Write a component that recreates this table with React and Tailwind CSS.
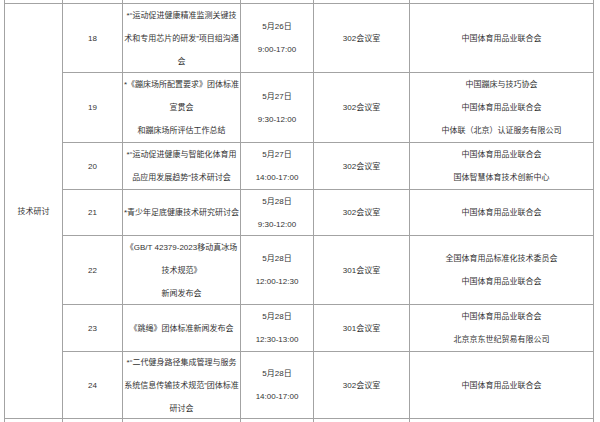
import React from "react";

const rows = [
  {
    no: "18",
    title: ["*“运动促进健康精准监测关键技", "术和专用芯片的研发”项目组沟通", "会"],
    time: ["5月26日", "9:00-17:00"],
    room: "302会议室",
    org: ["中国体育用品业联合会"],
  },
  {
    no: "19",
    title: ["*《蹦床场所配置要求》团体标准", "宣贯会", "和蹦床场所评估工作总结"],
    time: ["5月27日", "9:30-12:00"],
    room: "302会议室",
    org: ["中国蹦床与技巧协会", "中国体育用品业联合会", "中体联（北京）认证服务有限公司"],
  },
  {
    no: "20",
    title: ["*“运动促进健康与智能化体育用", "品应用发展趋势”技术研讨会"],
    time: ["5月27日", "14:00-17:00"],
    room: "302会议室",
    org: ["中国体育用品业联合会", "国体智慧体育技术创新中心"],
  },
  {
    no: "21",
    title: ["*青少年足底健康技术研究研讨会"],
    time: ["5月28日", "9:30-12:00"],
    room: "302会议室",
    org: ["中国体育用品业联合会"],
  },
  {
    no: "22",
    title: ["《GB/T 42379-2023移动真冰场", "技术规范》", "新闻发布会"],
    time: ["5月28日", "12:00-12:30"],
    room: "301会议室",
    org: ["全国体育用品标准化技术委员会", "中国体育用品业联合会"],
  },
  {
    no: "23",
    title: ["《跳绳》团体标准新闻发布会"],
    time: ["5月28日", "12:30-13:00"],
    room: "301会议室",
    org: ["中国体育用品业联合会", "北京京东世纪贸易有限公司"],
  },
  {
    no: "24",
    title: ["*“二代健身路径集成管理与服务", "系统信息传输技术规范”团体标准", "研讨会"],
    time: ["5月28日", "14:00-17:00"],
    room: "302会议室",
    org: ["中国体育用品业联合会"],
  },
];

function Cell({ lines, className = "" }) {
  return (
    <div
      className={
        "border-r border-b border-[#a3a3a3] flex flex-col items-center justify-center text-center overflow-visible " +
        className
      }
    >
      {lines.map((l, i) => (
        <div key={i} className="whitespace-nowrap">
          {l}
        </div>
      ))}
    </div>
  );
}

export default function App() {
  return (
    <div
      className="w-[600px] h-[422px] overflow-hidden bg-white text-[#333333] text-[8px] leading-[23px]"
      style={{ fontFamily: '"Liberation Sans", "Noto Sans CJK SC", sans-serif' }}
    >
      <div className="ml-[4px] w-[590px] border-l border-[#a3a3a3] grid grid-cols-[58px_60px_118px_73px_96px_184px] grid-rows-[4px_69px_70px_47px_46px_69px_47px_67px_30px]">
        {[0, 1, 2, 3, 4, 5].map((i) => (
          <Cell key={"t" + i} lines={[]} />
        ))}
        <Cell lines={["技术研讨"]} className="row-span-7" />
        {rows.map((r) => (
          <React.Fragment key={r.no}>
            <Cell lines={[r.no]} />
            <Cell lines={r.title} />
            <Cell lines={r.time} />
            <Cell lines={[r.room]} />
            <Cell lines={r.org} />
          </React.Fragment>
        ))}
        {[0, 1, 2, 3, 4, 5].map((i) => (
          <Cell key={"b" + i} lines={[]} />
        ))}
      </div>
    </div>
  );
}
